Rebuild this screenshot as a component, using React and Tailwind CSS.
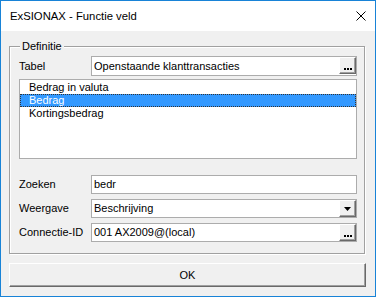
import React from "react";

const font = { fontFamily: '"Liberation Sans", Arial, sans-serif' };

function DotsButton() {
  return (
    <div className="w-[17px] h-[17px] bg-[#f0f0f0] border-t border-l border-t-white border-l-white border-r border-b border-r-[#696969] border-b-[#696969] shadow-[inset_-1px_-1px_0_#a0a0a0] flex items-end justify-center pb-[3px] gap-[1px]">
      <span className="w-[2px] h-[2px] bg-black" />
      <span className="w-[2px] h-[2px] bg-black" />
      <span className="w-[2px] h-[2px] bg-black" />
    </div>
  );
}

function ArrowButton() {
  return (
    <div className="w-[17px] h-[17px] bg-[#f0f0f0] border-t border-l border-t-white border-l-white border-r border-b border-r-[#696969] border-b-[#696969] shadow-[inset_-1px_-1px_0_#a0a0a0] flex items-center justify-center">
      <svg width="7" height="4" viewBox="0 0 7 4">
        <path d="M0 0h7L3.5 4z" fill="#000" />
      </svg>
    </div>
  );
}

function Row({ label, children, h }) {
  return (
    <div className={`flex items-center ${h}`}>
      <div className="w-[72px] text-[11px] text-black leading-none">{label}</div>
      {children}
    </div>
  );
}

export default function App() {
  return (
    <div
      className="w-[376px] h-[297px] border border-[#1883d7] bg-[#f0f0f0] flex flex-col overflow-hidden"
      style={font}
    >
      {/* Title bar */}
      <div className="h-[30px] bg-white flex items-center justify-between pl-[9px] pr-[8px] shrink-0">
        <span className="text-[11.3px] text-black">ExSIONAX - Functie veld</span>
        <svg width="10" height="10" viewBox="0 0 10 10" className="mr-[1px]">
          <path d="M0.5 0.5L9.5 9.5M9.5 0.5L0.5 9.5" stroke="#000" strokeWidth="1" />
        </svg>
      </div>

      {/* Group box */}
      <div className="relative ml-[8px] mt-[15px] w-[356px] h-[208px] border border-[#a0a0a0] shadow-[inset_1px_1px_0_#ffffff,1px_1px_0_#ffffff] pt-[9px] pl-[9px] pr-[7px] flex flex-col shrink-0">
        <span className="absolute left-[10px] -top-[7px] px-[2px] bg-[#f0f0f0] text-[11px] leading-[13px] text-black">
          Definitie
        </span>

        <Row label="Tabel" h="h-[20px]">
          <div className="w-[266px] h-[20px] bg-white border border-[#acacac] flex items-start justify-between pl-[2px]">
            <span className="text-[11px] leading-[18px] text-black">Openstaande klanttransacties</span>
            <DotsButton />
          </div>
        </Row>

        <div className="mt-[3px] w-[338px] h-[80px] bg-white border border-[#acacac] flex flex-col pt-[1px]">
          <div className="h-[13px] pl-[9px] text-[11px] leading-[13px] text-black">Bedrag in valuta</div>
          <div className="h-[13px] pl-[8px] text-[11px] leading-[11px] text-white bg-[#3399ff] border border-dotted border-[#333]">
            Bedrag
          </div>
          <div className="h-[13px] pl-[9px] text-[11px] leading-[13px] text-black">Kortingsbedrag</div>
        </div>

        <div className="mt-[16px]">
          <Row label="Zoeken" h="h-[19px]">
            <div className="w-[266px] h-[19px] bg-white border border-[#acacac] pl-[2px] text-[11px] leading-[17px] text-black">
              bedr
            </div>
          </Row>
        </div>

        <div className="mt-[5px]">
          <Row label="Weergave" h="h-[19px]">
            <div className="w-[266px] h-[19px] bg-white border border-[#acacac] pl-[2px] flex items-start justify-between">
              <span className="text-[11px] leading-[17px] text-black">Beschrijving</span>
              <ArrowButton />
            </div>
          </Row>
        </div>

        <div className="mt-[5px]">
          <Row label="Connectie-ID" h="h-[19px]">
            <div className="w-[266px] h-[19px] bg-white border border-[#acacac] pl-[2px] flex items-start justify-between">
              <span className="text-[11px] leading-[17px] text-black">001 AX2009@(local)</span>
              <DotsButton />
            </div>
          </Row>
        </div>
      </div>

      {/* OK button */}
      <div className="ml-[8px] mt-[9px] w-[357px] h-[24px] bg-[#f0f0f0] border-t border-l border-t-white border-l-white border-r border-b border-r-[#696969] border-b-[#696969] shadow-[inset_-1px_-1px_0_#a0a0a0,0_0_0_0_#e3e3e3] flex items-center justify-center text-[11px] text-black shrink-0">
        OK
      </div>
    </div>
  );
}
